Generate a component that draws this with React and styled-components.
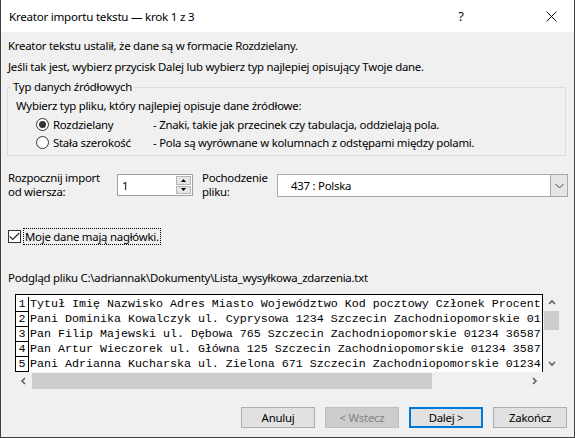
import React from "react";
import styled, { createGlobalStyle } from "styled-components";

const GlobalStyle = createGlobalStyle`
  html, body {
    margin: 0;
    padding: 0;
    background: #ffffff;
  }
  * {
    box-sizing: border-box;
  }
`;

const UI_FONT = `"Noto Sans", "Open Sans", sans-serif`;

const Window = styled.div`
  width: 575px;
  height: 438px;
  border: 1px solid #3f3f3f;
  border-top: none;
  background: #f0f0f0;
  font-family: ${UI_FONT};
  font-size: 11.4px;
  letter-spacing: -0.25px;
  color: #000;
  display: flex;
  flex-direction: column;
  overflow: hidden;
`;

const TitleBar = styled.div`
  height: 32px;
  background: #fff;
  display: flex;
  align-items: center;
  padding-left: 8px;
  font-size: 11.6px;
  color: #000;
`;

const TitleText = styled.div`
  flex: 1;
`;

const TitleButton = styled.div`
  width: 46px;
  height: 32px;
  margin-right: ${(p) => p.gap || 0}px;
  display: flex;
  align-items: center;
  justify-content: center;
  font-size: 13px;
  color: #111;
`;

const Body = styled.div`
  flex: 1;
  padding: 3px 6px 0 5px;
  display: flex;
  flex-direction: column;
`;

const InfoLine = styled.div`
  line-height: 21px;
  padding-left: 2px;
`;

const GroupBox = styled.fieldset`
  margin: 2px 2px 0 1px;
  padding: 2px 8px 4px 8px;
  border: 1px solid #dcdcdc;
  min-width: 0;
`;

const Legend = styled.legend`
  padding: 0 2px;
  margin-left: -5px;
  line-height: 16px;
`;

const GroupLine = styled.div`
  line-height: 18px;
  height: 18px;
`;

const RadioRow = styled.div`
  display: flex;
  align-items: center;
  height: 18px;
  padding-left: 20px;
`;

const RadioCircle = styled.span`
  width: 13px;
  height: 13px;
  border-radius: 50%;
  border: 1px solid #333;
  background: #fff;
  display: flex;
  align-items: center;
  justify-content: center;
  margin-right: 4px;
  &::after {
    content: "";
    width: 7px;
    height: 7px;
    border-radius: 50%;
    background: ${(p) => (p.checked ? "#333" : "transparent")};
  }
`;

const RadioLabel = styled.span`
  width: 100px;
`;

const ImportRow = styled.div`
  display: flex;
  align-items: flex-start;
  margin-top: 15px;
  padding-left: 2px;
`;

const FieldLabel = styled.div`
  width: ${(p) => p.w}px;
  line-height: 14px;
`;

const Spinner = styled.div`
  margin-top: 3px;
  width: 76px;
  height: 22px;
  background: #fff;
  border: 1px solid #a0a0a0;
  display: flex;
  align-items: center;
  margin-right: 9px;
`;

const SpinnerValue = styled.span`
  flex: 1;
  padding-left: 4px;
`;

const SpinButtons = styled.div`
  width: 15px;
  height: 18px;
  margin-right: 1px;
  display: flex;
  flex-direction: column;
  gap: 1px;
`;

const SpinButton = styled.div`
  flex: 1;
  background: #e6e6e6;
  border: 1px solid #b5b5b5;
  display: flex;
  align-items: center;
  justify-content: center;
`;

const Select = styled.div`
  margin-top: 3px;
  flex: 1;
  height: 23px;
  background: #fff;
  border: 1px solid #a8a8a8;
  display: flex;
  align-items: center;
`;

const SelectValue = styled.span`
  flex: 1;
  padding-left: 13px;
`;

const SelectArrow = styled.div`
  width: 17px;
  height: 21px;
  background: #e5e5e5;
  border-left: 1px solid #a8a8a8;
  display: flex;
  align-items: center;
  justify-content: center;
`;

const CheckRow = styled.div`
  display: flex;
  align-items: center;
  margin-top: 28px;
  height: 18px;
  padding-left: 2px;
`;

const CheckBox = styled.span`
  width: 13px;
  height: 13px;
  border: 1px solid #333;
  background: #fff;
  display: flex;
  align-items: center;
  justify-content: center;
  margin-right: 2px;
`;

const FocusLabel = styled.span`
  border: 1px dotted #000;
  padding: 0 1px;
  line-height: 15px;
`;

const PreviewLabel = styled.div`
  margin-top: 25px;
  line-height: 16px;
  padding-left: 2px;
`;

const PreviewFrame = styled.div`
  margin-top: 8px;
  margin-left: 9px;
  width: 545px;
  display: grid;
  grid-template-columns: 528px 17px;
  grid-template-rows: 78px 17px;
`;

const PreviewBox = styled.div`
  background: #fff;
  border: 1px solid #000;
  border-bottom: none;
  padding-top: 2px;
  overflow: hidden;
  font-family: "Liberation Mono", "Courier New", monospace;
  font-size: 11.67px;
  letter-spacing: 0;
`;

const PreviewLine = styled.div`
  display: flex;
  height: 15px;
  line-height: 15px;
  white-space: pre;
`;

const LineNo = styled.span`
  width: 13px;
  flex: none;
  border-right: 1px solid #000;
  border-bottom: 1px solid #000;
  text-align: center;
  line-height: 14px;
  margin-right: 1px;
`;

const ScrollBar = styled.div`
  background: #f0f0f0;
  display: flex;
  flex-direction: ${(p) => (p.vertical ? "column" : "row")};
  align-items: center;
`;

const ScrollArrow = styled.div`
  width: 17px;
  height: 17px;
  flex: none;
  display: flex;
  align-items: center;
  justify-content: center;
`;

const Thumb = styled.div`
  background: #cdcdcd;
  ${(p) => (p.vertical ? "width: 15px; height: 19px;" : "height: 16px; width: 400px;")}
`;

const Spacer = styled.div`
  flex: 1;
`;

const ButtonRow = styled.div`
  display: flex;
  justify-content: flex-end;
  gap: 10px;
  margin-top: 18px;
  margin-right: 1px;
`;

const Button = styled.div`
  width: 74px;
  height: 21px;
  display: flex;
  align-items: center;
  justify-content: center;
  background: ${(p) => (p.disabled ? "#cccccc" : "#e1e1e1")};
  border: ${(p) =>
    p.primary ? "2px solid #0078d7" : `1px solid ${p.disabled ? "#bfbfbf" : "#adadad"}`};
  color: ${(p) => (p.disabled ? "#838383" : "#000")};
`;

const Chevron = ({ dir }) => {
  const paths = {
    up: "M1 5 L4 2 L7 5",
    down: "M1 2 L4 5 L7 2",
    left: "M5 1 L2 4 L5 7",
    right: "M2 1 L5 4 L2 7",
  };
  return (
    <svg width="8" height="8" viewBox="0 0 8 8">
      <path d={paths[dir]} fill="none" stroke="#606060" strokeWidth="1.6" />
    </svg>
  );
};

const Tri = ({ up }) => (
  <svg width="5" height="3" viewBox="0 0 5 3">
    <path d={up ? "M0 3 L2.5 0 L5 3 Z" : "M0 0 L2.5 3 L5 0 Z"} fill="#000" />
  </svg>
);

// only the part of each row that fits in the preview window
const lines = [
  "Tytuł Imię Nazwisko Adres Miasto Województwo Kod pocztowy Członek Procent",
  "Pani Dominika Kowalczyk ul. Cyprysowa 1234 Szczecin Zachodniopomorskie 01",
  "Pan Filip Majewski ul. Dębowa 765 Szczecin Zachodniopomorskie 01234 36587",
  "Pan Artur Wieczorek ul. Główna 125 Szczecin Zachodniopomorskie 01234 3587",
  "Pani Adrianna Kucharska ul. Zielona 671 Szczecin Zachodniopomorskie 01234",
];

export default function App() {
  return (
    <>
      <GlobalStyle />
      <Window>
        <TitleBar>
          <TitleText>Kreator importu tekstu — krok 1 z 3</TitleText>
          <TitleButton gap={44}>?</TitleButton>
          <TitleButton>
            <svg width="11" height="11" viewBox="0 0 11 11">
              <path d="M0.5 0.5 L10.5 10.5 M10.5 0.5 L0.5 10.5" stroke="#111" strokeWidth="1" />
            </svg>
          </TitleButton>
        </TitleBar>
        <Body>
          <InfoLine>Kreator tekstu ustalił, że dane są w formacie Rozdzielany.</InfoLine>
          <InfoLine>
            Jeśli tak jest, wybierz przycisk Dalej lub wybierz typ najlepiej opisujący Twoje dane.
          </InfoLine>
          <GroupBox>
            <Legend>Typ danych źródłowych</Legend>
            <GroupLine>Wybierz typ pliku, który najlepiej opisuje dane źródłowe:</GroupLine>
            <RadioRow>
              <RadioCircle checked />
              <RadioLabel>Rozdzielany</RadioLabel>
              <span>- Znaki, takie jak przecinek czy tabulacja, oddzielają pola.</span>
            </RadioRow>
            <RadioRow>
              <RadioCircle />
              <RadioLabel>Stała szerokość</RadioLabel>
              <span>- Pola są wyrównane w kolumnach z odstępami między polami.</span>
            </RadioRow>
          </GroupBox>
          <ImportRow>
            <FieldLabel w={109}>
              Rozpocznij import
              <br />
              od wiersza:
            </FieldLabel>
            <Spinner>
              <SpinnerValue>1</SpinnerValue>
              <SpinButtons>
                <SpinButton>
                  <Tri up />
                </SpinButton>
                <SpinButton>
                  <Tri />
                </SpinButton>
              </SpinButtons>
            </Spinner>
            <FieldLabel w={75}>
              Pochodzenie
              <br />
              pliku:
            </FieldLabel>
            <Select>
              <SelectValue>437 : Polska</SelectValue>
              <SelectArrow>
                <svg width="9" height="6" viewBox="0 0 9 6">
                  <path d="M0.5 1 L4.5 5 L8.5 1" fill="none" stroke="#444" strokeWidth="1" />
                </svg>
              </SelectArrow>
            </Select>
          </ImportRow>
          <CheckRow>
            <CheckBox>
              <svg width="11" height="9" viewBox="0 0 11 9">
                <path d="M0.8 4.5 L3.8 7.5 L10.2 1" fill="none" stroke="#222" strokeWidth="1.1" />
              </svg>
            </CheckBox>
            <FocusLabel>Moje dane mają nagłówki.</FocusLabel>
          </CheckRow>
          <PreviewLabel>
            Podgląd pliku C:\adriannak\Dokumenty\Lista_wysyłkowa_zdarzenia.txt
          </PreviewLabel>
          <PreviewFrame>
            <PreviewBox>
              {lines.map((line, i) => (
                <PreviewLine key={i}>
                  <LineNo>{i + 1}</LineNo>
                  {line}
                </PreviewLine>
              ))}
            </PreviewBox>
            <ScrollBar vertical>
              <ScrollArrow>
                <Chevron dir="up" />
              </ScrollArrow>
              <Thumb vertical />
              <Spacer />
              <ScrollArrow>
                <Chevron dir="down" />
              </ScrollArrow>
            </ScrollBar>
            <ScrollBar>
              <ScrollArrow>
                <Chevron dir="left" />
              </ScrollArrow>
              <Thumb />
              <Spacer />
              <ScrollArrow>
                <Chevron dir="right" />
              </ScrollArrow>
            </ScrollBar>
            <div />
          </PreviewFrame>
          <ButtonRow>
            <Button>Anuluj</Button>
            <Button disabled>&lt; Wstecz</Button>
            <Button primary>Dalej &gt;</Button>
            <Button>Zakończ</Button>
          </ButtonRow>
        </Body>
      </Window>
    </>
  );
}
